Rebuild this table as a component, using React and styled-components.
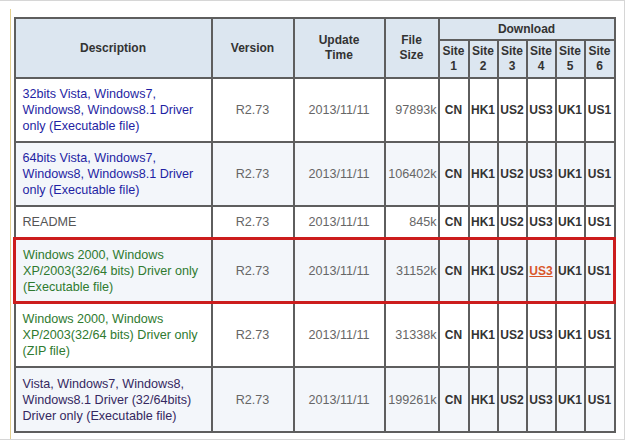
import React from 'react'
import styled, { createGlobalStyle } from 'styled-components'

const GlobalStyle = createGlobalStyle`
  html, body {
    margin: 0;
    padding: 0;
    background: #fff;
  }
  body {
    font-family: "Liberation Sans", Arial, sans-serif;
  }
`

const Frame = styled.div`
  width: 624px;
  height: 438px;
  border-top: 1px solid #d6d6d6;
  border-right: 1px solid #d6d6d6;
  border-bottom: 1px solid #d6d6d6;
  overflow: hidden;
`

const Panel = styled.div`
  margin: 8px 0 0 10px;
  height: 429px;
  border-left: 1px solid #e3cf8f;
  padding: 8px 0 0 2px;
  overflow: hidden;
`

const Table = styled.table`
  border-collapse: collapse;
  table-layout: fixed;
  width: 600px;
  font-size: 12.6px;
  color: #666;
`

const Col = styled.col`
  width: ${p => p.$w}px;
`

const Th = styled.th`
  background: #dce6f0;
  border: 2px solid #5e5e5e;
  color: #333;
  font-weight: bold;
  font-size: 12px;
  line-height: 15px;
  text-align: center;
  vertical-align: middle;
  padding: 0;
  height: ${p => p.$h || 36}px;
`

const Row = styled.tr`
  background: ${p => (p.$alt ? '#f3f6fa' : '#fff')};
  border: ${p => (p.$marked ? '3px solid #cc1d1d' : 'none')};
`

const Td = styled.td`
  border: 2px solid #5e5e5e;
  height: ${p => p.$h || 62}px;
  padding: 0;
  vertical-align: middle;
  text-align: center;
  line-height: 16px;
  color: #666;
`

const DescCell = styled(Td)`
  text-align: left;
  padding: 0 4px 0 7px;
  color: ${p => p.$color};
`

const SizeCell = styled(Td)`
  text-align: right;
  padding-right: 1px;
`

const SiteCell = styled(Td)`
  font-weight: bold;
  font-size: 12px;
  color: #333;
`

const SiteLink = styled.span`
  color: #d9562a;
  text-decoration: underline;
`

const colors = {
  blue: '#1f1fa3',
  gray: '#555',
  green: '#2f7a2f',
  navy: '#35285f'
}

const widths = [197, 82, 91, 54, 30, 29, 29, 29, 29, 30]

const sites = ['CN', 'HK1', 'US2', 'US3', 'UK1', 'US1']

const rows = [
  { desc: ['32bits Vista, Windows7,', 'Windows8, Windows8.1 Driver', 'only (Executable file)'], color: colors.blue, size: '97893k', h: 62 },
  { desc: ['64bits Vista, Windows7,', 'Windows8, Windows8.1 Driver', 'only (Executable file)'], color: colors.blue, size: '106402k', h: 62, alt: true },
  { desc: ['README'], color: colors.gray, size: '845k', h: 30 },
  { desc: ['Windows 2000, Windows', 'XP/2003(32/64 bits) Driver only', '(Executable file)'], color: colors.green, size: '31152k', h: 61, alt: true, marked: true },
  { desc: ['Windows 2000, Windows', 'XP/2003(32/64 bits) Driver only', '(ZIP file)'], color: colors.green, size: '31338k', h: 62 },
  { desc: ['Vista, Windows7, Windows8,', 'Windows8.1 Driver (32/64bits)', 'Driver only (Executable file)'], color: colors.navy, size: '199261k', h: 63, alt: true }
]

const App = () => (
  <>
    <GlobalStyle />
    <Frame>
      <Panel>
        <Table>
          <colgroup>
            {widths.map((w, i) => <Col key={i} $w={w} />)}
          </colgroup>
          <thead>
            <tr>
              <Th rowSpan={2}>Description</Th>
              <Th rowSpan={2}>Version</Th>
              <Th rowSpan={2}>Update<br />Time</Th>
              <Th rowSpan={2}>File<br />Size</Th>
              <Th colSpan={6} $h={20}>Download</Th>
            </tr>
            <tr>
              {[1, 2, 3, 4, 5, 6].map(n => (
                <Th key={n} $h={36}>Site<br />{n}</Th>
              ))}
            </tr>
          </thead>
          <tbody>
            {rows.map((r, i) => (
              <Row key={i} $alt={r.alt} $marked={r.marked}>
                <DescCell $h={r.h} $color={r.color}>
                  {r.desc.map((l, j) => (
                    <React.Fragment key={j}>
                      {j > 0 && <br />}
                      {l}
                    </React.Fragment>
                  ))}
                </DescCell>
                <Td $h={r.h}>R2.73</Td>
                <Td $h={r.h}>2013/11/11</Td>
                <SizeCell $h={r.h}>{r.size}</SizeCell>
                {sites.map(s => (
                  <SiteCell key={s} $h={r.h}>
                    {r.marked && s === 'US3' ? <SiteLink>{s}</SiteLink> : s}
                  </SiteCell>
                ))}
              </Row>
            ))}
          </tbody>
        </Table>
      </Panel>
    </Frame>
  </>
)

export default App
